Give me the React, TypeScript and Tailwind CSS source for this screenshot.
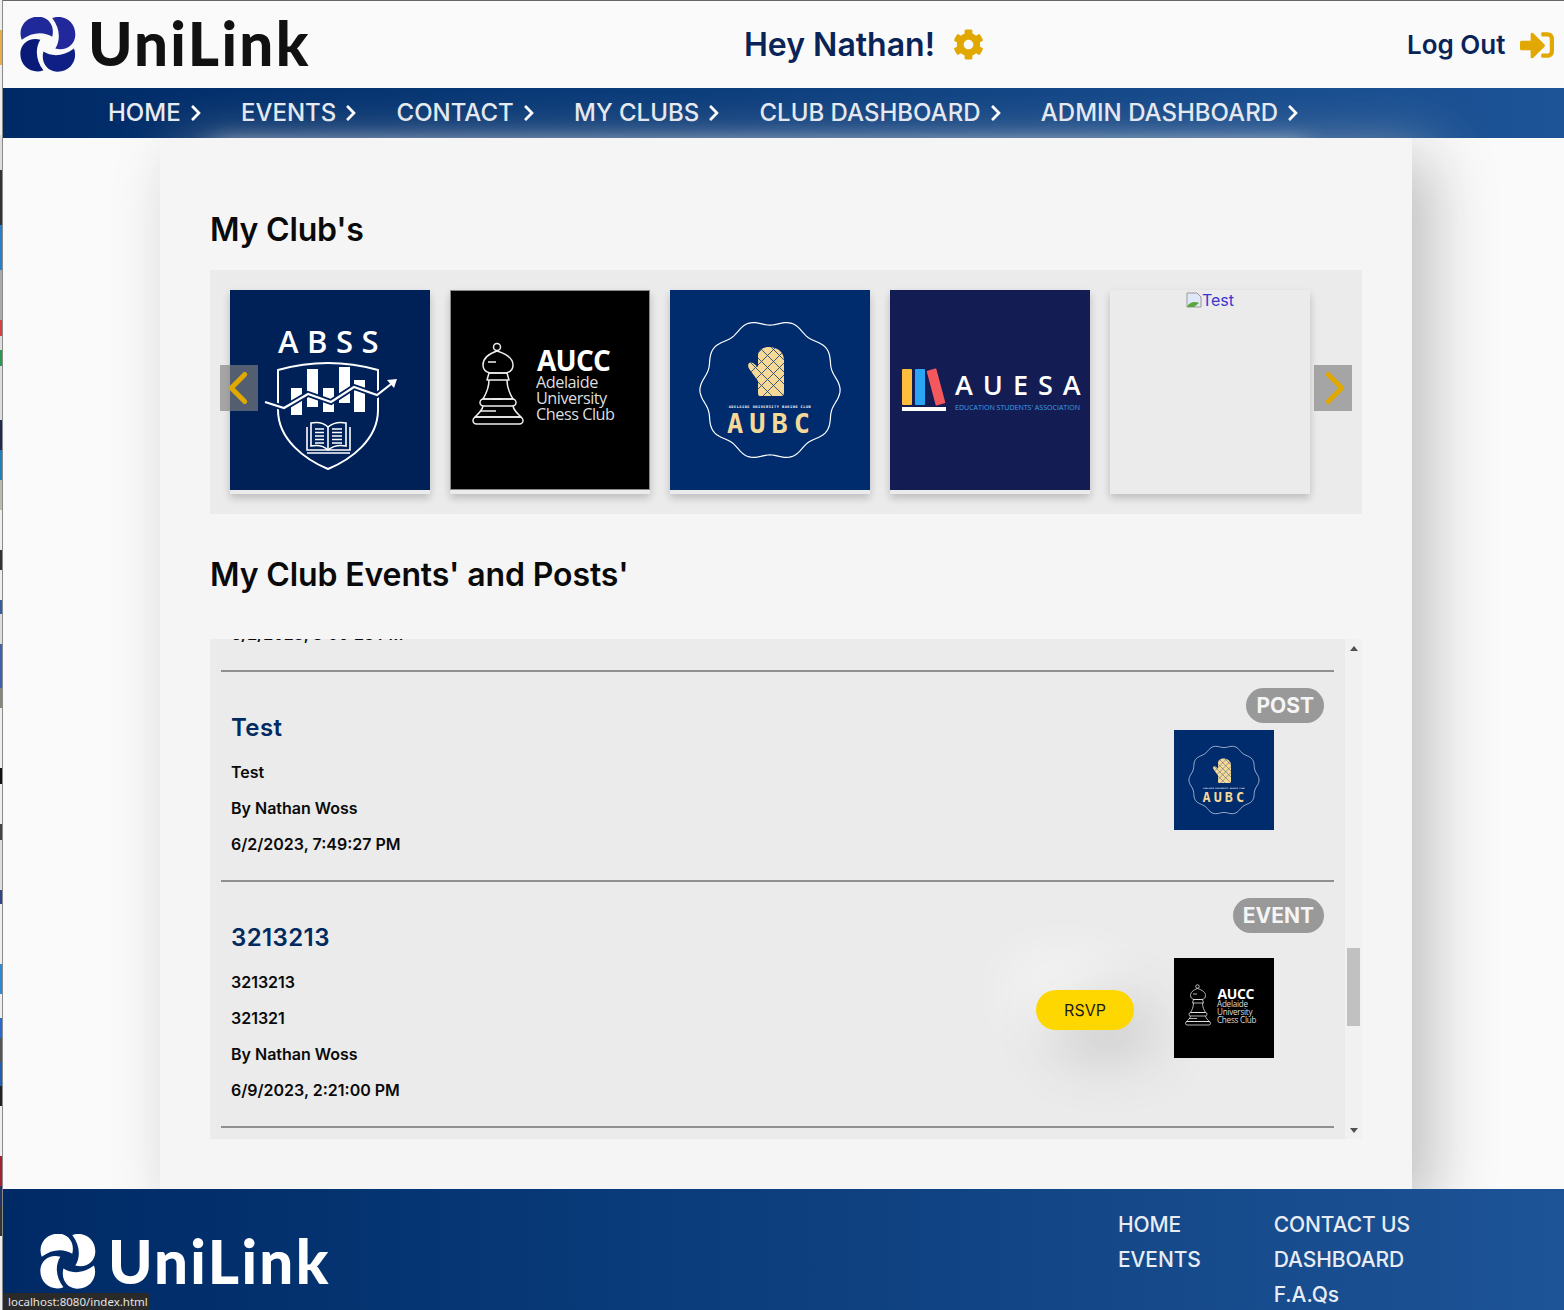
import React from 'react';
import { ChevronLeft, ChevronRight } from 'lucide-react';
import { FaChevronRight, FaCog, FaSignInAlt } from 'react-icons/fa';

const navItems = ['HOME', 'EVENTS', 'CONTACT', 'MY CLUBS', 'CLUB DASHBOARD', 'ADMIN DASHBOARD'];

// the desktop showing through at the left edge of the window
const edgeColors: [number, string][] = [
  [30, '#eeeeee'], [35, '#e8b040'], [70, '#eeeeee'], [35, '#dddddd'], [55, '#333333'],
  [45, '#2a80c8'], [50, '#aaaaaa'], [16, '#d84040'], [14, '#dddddd'], [16, '#2a9a50'],
  [54, '#dddddd'], [30, '#202a50'], [30, '#2080c0'], [30, '#bbbbaa'], [40, '#eeeeee'],
  [20, '#333333'], [30, '#eeeeee'], [14, '#3060a0'], [30, '#dddddd'], [44, '#4060b0'],
  [20, '#888877'], [60, '#eeeeee'], [16, '#111111'], [40, '#eeeeee'], [16, '#444444'],
  [50, '#dddddd'], [14, '#334488'], [60, '#eeeeee'], [30, '#2a8ad8'], [24, '#eeeeee'],
  [20, '#2a6ad0'], [24, '#555555'], [24, '#2060b0'], [20, '#222222'], [50, '#eeeeee'],
  [30, '#aa2030'], [20, '#223366'], [30, '#333333'],
];

const wavePoints = Array.from({ length: 180 }, (_, i) => {
  const a = (i / 180) * Math.PI * 2;
  const r = 67.5 + 2.6 * Math.cos(a * 10);
  return `${(100 + r * Math.cos(a)).toFixed(1)},${(100 + r * Math.sin(a)).toFixed(1)}`;
}).join(' ');

const UniLinkMark = ({ light, className }: { light?: boolean; className: string }) => {
  const petal = 'M20 85C8 55 28 16 70 17C100 18 118 45 110 76C85 60 50 62 20 85Z';
  const colors = light
    ? ['#ffffff', '#ffffff', '#ffffff', '#ffffff']
    : ['#20299a', '#22279c', '#101f85', '#0a1a78'];
  return (
    <svg viewBox="15 18 165 165" className={className}>
      {[0, 90, 180, 270].map((deg, i) => (
        <path key={deg} d={petal} fill={colors[i]} transform={`rotate(${deg} 97 98)`} />
      ))}
    </svg>
  );
};

const AbssLogo = () => (
  <svg viewBox="0 0 200 200" className="block w-full h-full bg-[#002158]">
    <text x="48" y="63" fill="#fff" fontSize="31" fontWeight="600" letterSpacing="8.5" fontFamily="Open Sans, sans-serif">ABSS</text>
    <path d="M48 80Q98 66 148 80V120C148 150 120 170 98 179C76 170 48 150 48 120Z" fill="none" stroke="#fff" strokeWidth="2" />
    <g fill="#fff">
      <rect x="61" y="98" width="11" height="27" />
      <rect x="77" y="79" width="11" height="38" />
      <rect x="93" y="98" width="11" height="24" />
      <rect x="109" y="77" width="11" height="36" />
      <rect x="124" y="90" width="11" height="32" />
    </g>
    <path d="M35 112L54 118L78 104L101 112L124 97L147 105L165 91" fill="none" stroke="#002158" strokeWidth="6" />
    <path d="M35 112L54 118L78 104L101 112L124 97L147 105L165 91" fill="none" stroke="#fff" strokeWidth="2.2" />
    <path d="M157 90L167 89L164 98Z" fill="#fff" />
    <g fill="none" stroke="#fff" strokeWidth="1.6">
      <path d="M77 137V160H120V137" />
      <path d="M81 133Q92 131 98 137Q105 131 116 133V156Q105 154 98 160Q92 154 81 156Z" />
      <path d="M98 137V160M85 139H94M85 142.5H94M85 146H94M85 149.5H94M85 153H94M102 139H112M102 142.5H112M102 146H112M102 149.5H112M102 153H112" />
      <path d="M77 163H120" />
    </g>
  </svg>
);

const AuccLogo = ({ framed }: { framed?: boolean }) => (
  <svg viewBox="0 0 200 200" className={`block w-full h-full bg-black ${framed ? 'outline outline-1 -outline-offset-1 outline-[#8a8a8a]' : ''}`}>
    <g fill="none" stroke="#eee" strokeWidth="1.5" strokeLinejoin="round">
      <circle cx="47" cy="57" r="3.5" />
      <path d="M47 61C38 64 33 69 33 75C33 79 36 82 40 83H56C61 82 63 79 63 75C63 69 57 64 47 61Z" />
      <path d="M39 83H57L59 90H37Z" />
      <path d="M39 90C39 98 36 104 33 109H63C60 104 57 98 57 90" />
      <rect x="30" y="109" width="36" height="7" rx="3.5" />
      <path d="M33 116C32 121 28 124 25 127H71C68 124 64 121 63 116" />
      <rect x="23" y="127" width="50" height="7" rx="3.5" />
      <path d="M38 72H46M42 109H52M30 121H46" />
    </g>
    <g fontFamily="Open Sans, sans-serif">
      <text x="87" y="81" fill="#fff" fontSize="28" fontWeight="700" letterSpacing="-0.8">AUCC</text>
      <text x="86" y="98" fill="#ddd" fontSize="16.3" letterSpacing="-0.5">Adelaide</text>
      <text x="86" y="114" fill="#ddd" fontSize="16.3" letterSpacing="-0.5">University</text>
      <text x="86" y="130" fill="#ddd" fontSize="16.3" letterSpacing="-0.5">Chess Club</text>
    </g>
  </svg>
);

const AubcLogo = () => (
  <svg viewBox="0 0 200 200" className="block w-full h-full bg-[#002c6e]">
    <polygon points={wavePoints} fill="none" stroke="#fff" strokeWidth="1.2" />
    <clipPath id="mitt-clip">
      <path d="M90 106C88 106 88 104 88 102V91L80 80C76 75 79 71 83 73L88 77V66C88 60 93 57 99 57C107 57 114 62 114 70V102C114 105 113 106 111 106Z" />
    </clipPath>
    <path d="M90 106C88 106 88 104 88 102V91L80 80C76 75 79 71 83 73L88 77V66C88 60 93 57 99 57C107 57 114 62 114 70V102C114 105 113 106 111 106Z" fill="#f5d998" />
    <g clipPath="url(#mitt-clip)" stroke="#2c4a6e" strokeWidth="0.9">
      <path d="M70 50L125 105M70 62L125 117M70 74L125 129M82 50L125 93M94 50L125 81M125 50L70 105M125 62L70 117M125 74L70 129M113 50L70 93M101 50L70 81" />
    </g>
    <text x="100" y="117.5" textAnchor="middle" fill="#fff" fontSize="3.6" fontWeight="700" letterSpacing="0.5" fontFamily="DejaVu Sans Mono, monospace">ADELAIDE UNIVERSITY BAKING CLUB</text>
    <text x="57" y="143" fill="#f5d998" fontSize="27" fontWeight="700" letterSpacing="6" fontFamily="DejaVu Sans Mono, monospace">AUBC</text>
  </svg>
);

const AuesaLogo = () => (
  <svg viewBox="0 0 200 200" className="block w-full h-full bg-[#141c54]">
    <rect x="12" y="79" width="10" height="36" rx="1" fill="#ffbd3e" />
    <rect x="25" y="79" width="10" height="36" rx="1" fill="#2aa5f5" />
    <rect x="41" y="79" width="10" height="36" rx="1" fill="#f4585c" transform="rotate(-15 46 97)" />
    <rect x="12" y="117" width="44" height="4" fill="#fff" />
    <text x="65" y="105" fill="#fff" fontSize="27" fontWeight="600" letterSpacing="10" fontFamily="Open Sans, sans-serif">AUESA</text>
    <text x="65" y="120" fill="#3aa0ee" fontSize="8" fontFamily="Open Sans, sans-serif" textLength="125" lengthAdjust="spacingAndGlyphs">EDUCATION STUDENTS' ASSOCIATION</text>
  </svg>
);

const ClubCard = ({ children }: { children: React.ReactNode }) => (
  <div className="w-[200px] h-[204px] shrink-0 bg-[#ebebeb] shadow-[0_4px_8px_rgba(0,0,0,0.2)]">
    <div className="w-[200px] h-[200px]">{children}</div>
  </div>
);

const Para = ({ children }: { children: React.ReactNode }) => (
  <p className="text-base font-semibold leading-[20px] mb-4 text-[#0a0a0a]">{children}</p>
);

const FeedRow = ({ title, lines, badge, logo, rsvp }: { title: string; lines: string[]; badge: string; logo: React.ReactNode; rsvp?: boolean }) => (
  <div className="relative flex justify-between mx-[11px] border-b-2 border-[#8f8f8f]">
    <div className="pt-[41px] pb-[10px] pl-[10px]">
      <h3 className="text-2xl leading-[29px] font-semibold tracking-[0.4px] text-[#002a60] mb-[20px]">{title}</h3>
      {lines.map((line) => (
        <Para key={line}>{line}</Para>
      ))}
    </div>
    <div className="flex items-center gap-10 mr-[60px] pt-2">
      {rsvp && (
        <button className="w-[98px] h-[40px] mt-1 rounded-[20px] bg-[#ffd700] text-base text-[#1a1a1a] shadow-[20px_20px_60px_#bebebe,-20px_-20px_60px_#ffffff]">
          RSVP
        </button>
      )}
      <div className="w-[100px] h-[100px]">{logo}</div>
    </div>
    <span className="absolute top-[16px] right-[10px] h-[35px] px-[10px] rounded-[18px] bg-[#999999] text-[#f5f5f5] text-[21px] leading-[35px] font-bold">
      {badge}
    </span>
  </div>
);

const App: React.FC = () => {
  return (
    <div className="relative flex w-[1564px] h-[1310px] overflow-hidden bg-[#fafafa] font-['Inter',sans-serif]">
      <div className="flex w-[3px] shrink-0 flex-col bg-[#eeeeee] border-r border-[#8a8a8a]">
        {edgeColors.map(([h, color], i) => (
          <div key={i} style={{ height: h, background: color }} />
        ))}
      </div>

      <div className="flex-1 min-w-0 flex flex-col">
        <div className="h-px bg-[#666666]" />

        <header className="flex items-center h-[87px] bg-[#fafafa]">
          <UniLinkMark className="w-[56px] h-[56px] ml-[17px]" />
          <span className="ml-[12px] -mt-[4px] w-[656px] text-[60px] leading-none font-black text-[#111111] tracking-[2.3px] font-['Lato',sans-serif]">UniLink</span>
          <h1 className="text-[32px] font-semibold text-[#0a2458] whitespace-nowrap">Hey Nathan!</h1>
          <FaCog className="ml-[18px] text-[#e0a800]" size={31} />
          <span className="ml-[423px] text-[26px] font-semibold text-[#0a2458] whitespace-nowrap">Log Out</span>
          <FaSignInAlt className="ml-[15px] text-[#e0a800]" size={34} />
        </header>

        <nav className="flex items-center gap-[36.3px] h-[50px] pl-[105px] bg-gradient-to-r from-[#002a66] to-[#1d5497]">
          {navItems.map((item) => (
            <span key={item} className="flex items-center gap-[6px] text-2xl font-medium text-[#e8ecf3] whitespace-nowrap">
              {item}
              <FaChevronRight className="text-white" size={18} />
            </span>
          ))}
        </nav>

        <main className="relative z-10 w-[1252px] h-[1051px] shrink-0 ml-[157px] px-[50px] pt-[72px] bg-[#f5f5f5] shadow-[20px_20px_60px_#bebebe,-25px_-70px_24px_-80px_#ffffff]">
          <h2 className="text-[32px] leading-[39px] font-semibold tracking-[-0.2px] text-[#0a0a0a] mb-[21px]">My Club's</h2>

          <div className="relative flex gap-5 h-[244px] pt-5 px-5 bg-[#ebebeb]">
            <ClubCard><AbssLogo /></ClubCard>
            <ClubCard><AuccLogo framed /></ClubCard>
            <ClubCard><AubcLogo /></ClubCard>
            <ClubCard><AuesaLogo /></ClubCard>
            <ClubCard>
              <div className="flex justify-center items-center h-[20px] text-base text-[#3b35d0]">
                <svg viewBox="0 0 16 16" className="w-4 h-4">
                  <path d="M1 1H11L15 5V15H1Z" fill="#dfe8f6" stroke="#999" />
                  <path d="M1 15C3 10 9 9 13 11L8 15Z" fill="#5ba33c" />
                </svg>
                <span>Test</span>
              </div>
            </ClubCard>
            <button className="absolute left-[10px] top-[95px] flex items-center justify-center w-[38px] h-[46px] bg-[rgba(128,128,128,0.65)]">
              <ChevronLeft className="shrink-0 -ml-[3px] text-[#e0a800]" size={54} strokeWidth={2.2} />
            </button>
            <button className="absolute right-[10px] top-[95px] flex items-center justify-center w-[38px] h-[46px] bg-[rgba(128,128,128,0.65)]">
              <ChevronRight className="shrink-0 ml-[4px] text-[#e0a800]" size={54} strokeWidth={2.2} />
            </button>
          </div>

          <h2 className="mt-[41px] mb-[45px] text-[32px] leading-[39px] font-semibold tracking-[-0.12px] text-[#0a0a0a]">My Club Events' and Posts'</h2>

          <div className="flex h-[500px] bg-[#ebebeb]">
            <div className="flex-1 min-w-0 overflow-hidden">
              <div className="flex items-end h-[31px] mx-[11px] pl-[10px] overflow-hidden">
                <p className="text-base font-semibold leading-[20px] mb-[26px] text-[#0a0a0a]">6/2/2023, 8:00:25 PM</p>
              </div>
              <div className="mx-[11px] border-b-2 border-[#8f8f8f]" />
              <FeedRow title="Test" lines={['Test', 'By Nathan Woss', '6/2/2023, 7:49:27 PM']} badge="POST" logo={<AubcLogo />} />
              <FeedRow title="3213213" lines={['3213213', '321321', 'By Nathan Woss', '6/9/2023, 2:21:00 PM']} badge="EVENT" logo={<AuccLogo />} rsvp />
            </div>
            <div className="w-[17px] shrink-0 bg-[#f1f1f1] flex flex-col items-center">
              <svg viewBox="0 0 8 5" className="w-2 h-[5px] mt-[7px] fill-[#505050]"><path d="M4 0L8 5H0Z" /></svg>
              <div className="w-[13px] h-[78px] mt-[297px] bg-[#c1c1c1]" />
              <svg viewBox="0 0 8 5" className="w-2 h-[5px] mt-[102px] fill-[#505050]"><path d="M0 0H8L4 5Z" /></svg>
            </div>
          </div>
        </main>

        <footer className="relative z-20 flex h-[121px] shrink-0 bg-gradient-to-r from-[#002a66] to-[#1d5497]">
          <div className="flex items-start pl-[37px] pt-[45px] w-[1115px]">
            <UniLinkMark light className="w-[56px] h-[56px]" />
            <span className="ml-[12px] -mt-[1px] text-[60px] leading-[56px] font-black text-white tracking-[2.3px] font-['Lato',sans-serif]">UniLink</span>
          </div>
          <div className="flex gap-[73px] pt-[18px] text-[21px] leading-[35px] font-medium tracking-[-0.1px] text-[#e8ecf3]">
            <div className="flex flex-col">
              <span>HOME</span>
              <span>EVENTS</span>
            </div>
            <div className="flex flex-col">
              <span>CONTACT US</span>
              <span>DASHBOARD</span>
              <span>F.A.Qs</span>
            </div>
          </div>
        </footer>
      </div>

      <div className="absolute z-30 left-[3px] bottom-0 w-[147px] h-[17px] pl-[5px] bg-[#2a2a2a] text-[#e4e4e4] text-[11.5px] leading-[17px] font-['Noto_Sans',sans-serif]">
        localhost:8080/index.html
      </div>
    </div>
  );
};

export default App;
